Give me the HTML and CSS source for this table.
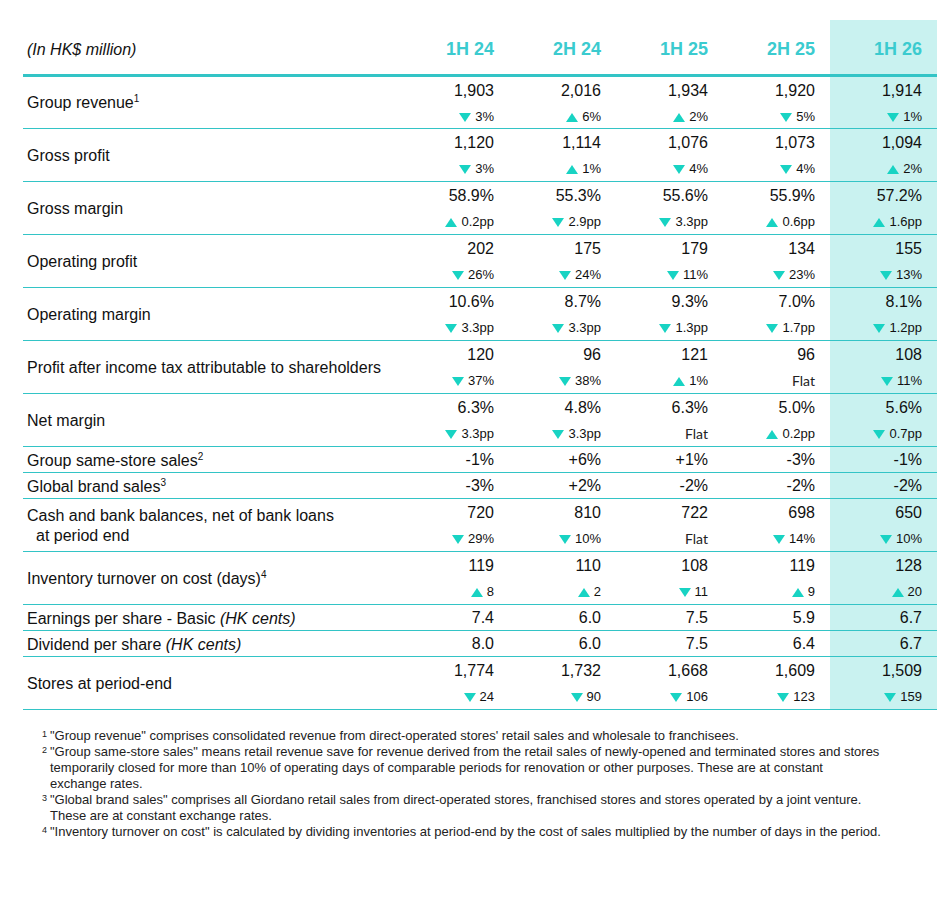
FILE: index.html
```html
<!DOCTYPE html>
<html lang="en">
<head>
    <meta charset="UTF-8">
    <meta name="viewport" content="width=device-width, initial-scale=1.0">
    <title>Financial Highlights</title>
    <link rel="stylesheet" href="styles.css">
</head>
<body>
    <div class="page">
        <table class="kpi-table">
            <colgroup>
                <col class="col-label">
                <col class="col-num"><col class="col-num"><col class="col-num"><col class="col-num"><col class="col-num">
            </colgroup>
            <thead>
                <tr>
                    <th class="unit">(In HK$ million)</th>
                    <th>1H 24</th>
                    <th>2H 24</th>
                    <th>1H 25</th>
                    <th>2H 25</th>
                    <th class="hl">1H 26</th>
                </tr>
            </thead>
            <tbody>
                <tr class="dbl">
                    <td class="label">Group revenue<sup>1</sup></td>
                    <td><div class="val">1,903</div><div class="chg"><i class="tri down"></i>3%</div></td>
                    <td><div class="val">2,016</div><div class="chg"><i class="tri up"></i>6%</div></td>
                    <td><div class="val">1,934</div><div class="chg"><i class="tri up"></i>2%</div></td>
                    <td><div class="val">1,920</div><div class="chg"><i class="tri down"></i>5%</div></td>
                    <td class="hl"><div class="val">1,914</div><div class="chg"><i class="tri down"></i>1%</div></td>
                </tr>
                <tr class="dbl">
                    <td class="label">Gross profit</td>
                    <td><div class="val">1,120</div><div class="chg"><i class="tri down"></i>3%</div></td>
                    <td><div class="val">1,114</div><div class="chg"><i class="tri up"></i>1%</div></td>
                    <td><div class="val">1,076</div><div class="chg"><i class="tri down"></i>4%</div></td>
                    <td><div class="val">1,073</div><div class="chg"><i class="tri down"></i>4%</div></td>
                    <td class="hl"><div class="val">1,094</div><div class="chg"><i class="tri up"></i>2%</div></td>
                </tr>
                <tr class="dbl">
                    <td class="label">Gross margin</td>
                    <td><div class="val">58.9%</div><div class="chg"><i class="tri up"></i>0.2pp</div></td>
                    <td><div class="val">55.3%</div><div class="chg"><i class="tri down"></i>2.9pp</div></td>
                    <td><div class="val">55.6%</div><div class="chg"><i class="tri down"></i>3.3pp</div></td>
                    <td><div class="val">55.9%</div><div class="chg"><i class="tri up"></i>0.6pp</div></td>
                    <td class="hl"><div class="val">57.2%</div><div class="chg"><i class="tri up"></i>1.6pp</div></td>
                </tr>
                <tr class="dbl">
                    <td class="label">Operating profit</td>
                    <td><div class="val">202</div><div class="chg"><i class="tri down"></i>26%</div></td>
                    <td><div class="val">175</div><div class="chg"><i class="tri down"></i>24%</div></td>
                    <td><div class="val">179</div><div class="chg"><i class="tri down"></i>11%</div></td>
                    <td><div class="val">134</div><div class="chg"><i class="tri down"></i>23%</div></td>
                    <td class="hl"><div class="val">155</div><div class="chg"><i class="tri down"></i>13%</div></td>
                </tr>
                <tr class="dbl">
                    <td class="label">Operating margin</td>
                    <td><div class="val">10.6%</div><div class="chg"><i class="tri down"></i>3.3pp</div></td>
                    <td><div class="val">8.7%</div><div class="chg"><i class="tri down"></i>3.3pp</div></td>
                    <td><div class="val">9.3%</div><div class="chg"><i class="tri down"></i>1.3pp</div></td>
                    <td><div class="val">7.0%</div><div class="chg"><i class="tri down"></i>1.7pp</div></td>
                    <td class="hl"><div class="val">8.1%</div><div class="chg"><i class="tri down"></i>1.2pp</div></td>
                </tr>
                <tr class="dbl">
                    <td class="label">Profit after income tax attributable to shareholders</td>
                    <td><div class="val">120</div><div class="chg"><i class="tri down"></i>37%</div></td>
                    <td><div class="val">96</div><div class="chg"><i class="tri down"></i>38%</div></td>
                    <td><div class="val">121</div><div class="chg"><i class="tri up"></i>1%</div></td>
                    <td><div class="val">96</div><div class="chg flat">Flat</div></td>
                    <td class="hl"><div class="val">108</div><div class="chg"><i class="tri down"></i>11%</div></td>
                </tr>
                <tr class="dbl">
                    <td class="label">Net margin</td>
                    <td><div class="val">6.3%</div><div class="chg"><i class="tri down"></i>3.3pp</div></td>
                    <td><div class="val">4.8%</div><div class="chg"><i class="tri down"></i>3.3pp</div></td>
                    <td><div class="val">6.3%</div><div class="chg flat">Flat</div></td>
                    <td><div class="val">5.0%</div><div class="chg"><i class="tri up"></i>0.2pp</div></td>
                    <td class="hl"><div class="val">5.6%</div><div class="chg"><i class="tri down"></i>0.7pp</div></td>
                </tr>
                <tr class="sgl">
                    <td class="label">Group same-store sales<sup>2</sup></td>
                    <td>-1%</td>
                    <td>+6%</td>
                    <td>+1%</td>
                    <td>-3%</td>
                    <td class="hl">-1%</td>
                </tr>
                <tr class="sgl">
                    <td class="label">Global brand sales<sup>3</sup></td>
                    <td>-3%</td>
                    <td>+2%</td>
                    <td>-2%</td>
                    <td>-2%</td>
                    <td class="hl">-2%</td>
                </tr>
                <tr class="dbl">
                    <td class="label">Cash and bank balances, net of bank loans<br><span class="indent">at period end</span></td>
                    <td><div class="val">720</div><div class="chg"><i class="tri down"></i>29%</div></td>
                    <td><div class="val">810</div><div class="chg"><i class="tri down"></i>10%</div></td>
                    <td><div class="val">722</div><div class="chg flat">Flat</div></td>
                    <td><div class="val">698</div><div class="chg"><i class="tri down"></i>14%</div></td>
                    <td class="hl"><div class="val">650</div><div class="chg"><i class="tri down"></i>10%</div></td>
                </tr>
                <tr class="dbl">
                    <td class="label">Inventory turnover on cost (days)<sup>4</sup></td>
                    <td><div class="val">119</div><div class="chg"><i class="tri up"></i>8</div></td>
                    <td><div class="val">110</div><div class="chg"><i class="tri up"></i>2</div></td>
                    <td><div class="val">108</div><div class="chg"><i class="tri down"></i>11</div></td>
                    <td><div class="val">119</div><div class="chg"><i class="tri up"></i>9</div></td>
                    <td class="hl"><div class="val">128</div><div class="chg"><i class="tri up"></i>20</div></td>
                </tr>
                <tr class="sgl">
                    <td class="label">Earnings per share - Basic <em>(HK cents)</em></td>
                    <td>7.4</td>
                    <td>6.0</td>
                    <td>7.5</td>
                    <td>5.9</td>
                    <td class="hl">6.7</td>
                </tr>
                <tr class="sgl">
                    <td class="label">Dividend per share <em>(HK cents)</em></td>
                    <td>8.0</td>
                    <td>6.0</td>
                    <td>7.5</td>
                    <td>6.4</td>
                    <td class="hl">6.7</td>
                </tr>
                <tr class="dbl">
                    <td class="label">Stores at period-end</td>
                    <td><div class="val">1,774</div><div class="chg"><i class="tri down"></i>24</div></td>
                    <td><div class="val">1,732</div><div class="chg"><i class="tri down"></i>90</div></td>
                    <td><div class="val">1,668</div><div class="chg"><i class="tri down"></i>106</div></td>
                    <td><div class="val">1,609</div><div class="chg"><i class="tri down"></i>123</div></td>
                    <td class="hl"><div class="val">1,509</div><div class="chg"><i class="tri down"></i>159</div></td>
                </tr>
            </tbody>
        </table>

        <div class="notes">
            <div class="note"><sup>1</sup><p>"Group revenue" comprises consolidated revenue from direct-operated stores' retail sales and wholesale to franchisees.</p></div>
            <div class="note"><sup>2</sup><p>"Group same-store sales" means retail revenue save for revenue derived from the retail sales of newly-opened and terminated stores and stores<br>temporarily closed for more than 10% of operating days of comparable periods for renovation or other purposes. These are at constant<br>exchange rates.</p></div>
            <div class="note"><sup>3</sup><p>"Global brand sales" comprises all Giordano retail sales from direct-operated stores, franchised stores and stores operated by a joint venture.<br>These are at constant exchange rates.</p></div>
            <div class="note"><sup>4</sup><p>"Inventory turnover on cost" is calculated by dividing inventories at period-end by the cost of sales multiplied by the number of days in the period.</p></div>
        </div>
    </div>
</body>
</html>
```

FILE: styles.css
```css
body {
    margin: 0;
    background-color: #fff;
    font-family: "Liberation Sans", Arial, sans-serif;
    color: #111;
}
.page {
    padding: 20px 0 0 23px;
}
.kpi-table {
    width: 914px;
    border-collapse: collapse;
    table-layout: fixed;
    font-size: 16px;
}
.col-label {
    width: 379px;
}
.col-num {
    width: 107px;
}
.kpi-table th {
    height: 55px;
    box-sizing: border-box;
    padding: 6px 15px 0 0;
    text-align: right;
    font-size: 18px;
    font-weight: bold;
    color: #3bcbcf;
    border-bottom: 3px solid #33c4c6;
}
.kpi-table th.unit {
    text-align: left;
    padding-left: 4px;
    font-size: 16px;
    font-weight: normal;
    font-style: italic;
    color: #111;
}
.kpi-table td {
    box-sizing: border-box;
    padding: 0 15px 0 0;
    text-align: right;
    border-bottom: 1px solid #33c4c6;
}
.kpi-table td.label {
    text-align: left;
    padding-left: 4px;
    vertical-align: middle;
    line-height: 20px;
}
.kpi-table .hl {
    background-color: #c9f2f0;
}
.dbl td {
    height: 53px;
    vertical-align: top;
}
.dbl td.label {
    padding-top: 2px;
}
.sgl td {
    height: 26px;
    line-height: 20px;
    padding-top: 3px;
    vertical-align: top;
}
.val {
    line-height: 20px;
    padding-top: 4px;
}
.chg {
    margin-top: 7px;
    line-height: 18px;
    font-size: 13px;
}
.chg.flat {
    font-family: Lato, "Liberation Sans", sans-serif;
    font-size: 14px;
    color: #222;
}
.tri {
    display: inline-block;
    width: 0;
    height: 0;
    border-left: 6px solid transparent;
    border-right: 6px solid transparent;
    margin-right: 4px;
    vertical-align: -1px;
}
.tri.down {
    border-top: 9px solid #18d3c3;
}
.tri.up {
    border-bottom: 9px solid #18d3c3;
}
.label sup {
    font-size: 10px;
    line-height: 0;
    vertical-align: 6px;
}
.label .indent {
    padding-left: 9px;
}
.label em {
    font-style: italic;
}
.notes {
    padding: 18px 0 0 19px;
    font-size: 13px;
    line-height: 16px;
    color: #222;
}
.note {
    display: flex;
    white-space: nowrap;
}
.note sup {
    width: 8px;
    font-size: 9px;
    line-height: 12px;
}
.note p {
    margin: 0;
}
```
